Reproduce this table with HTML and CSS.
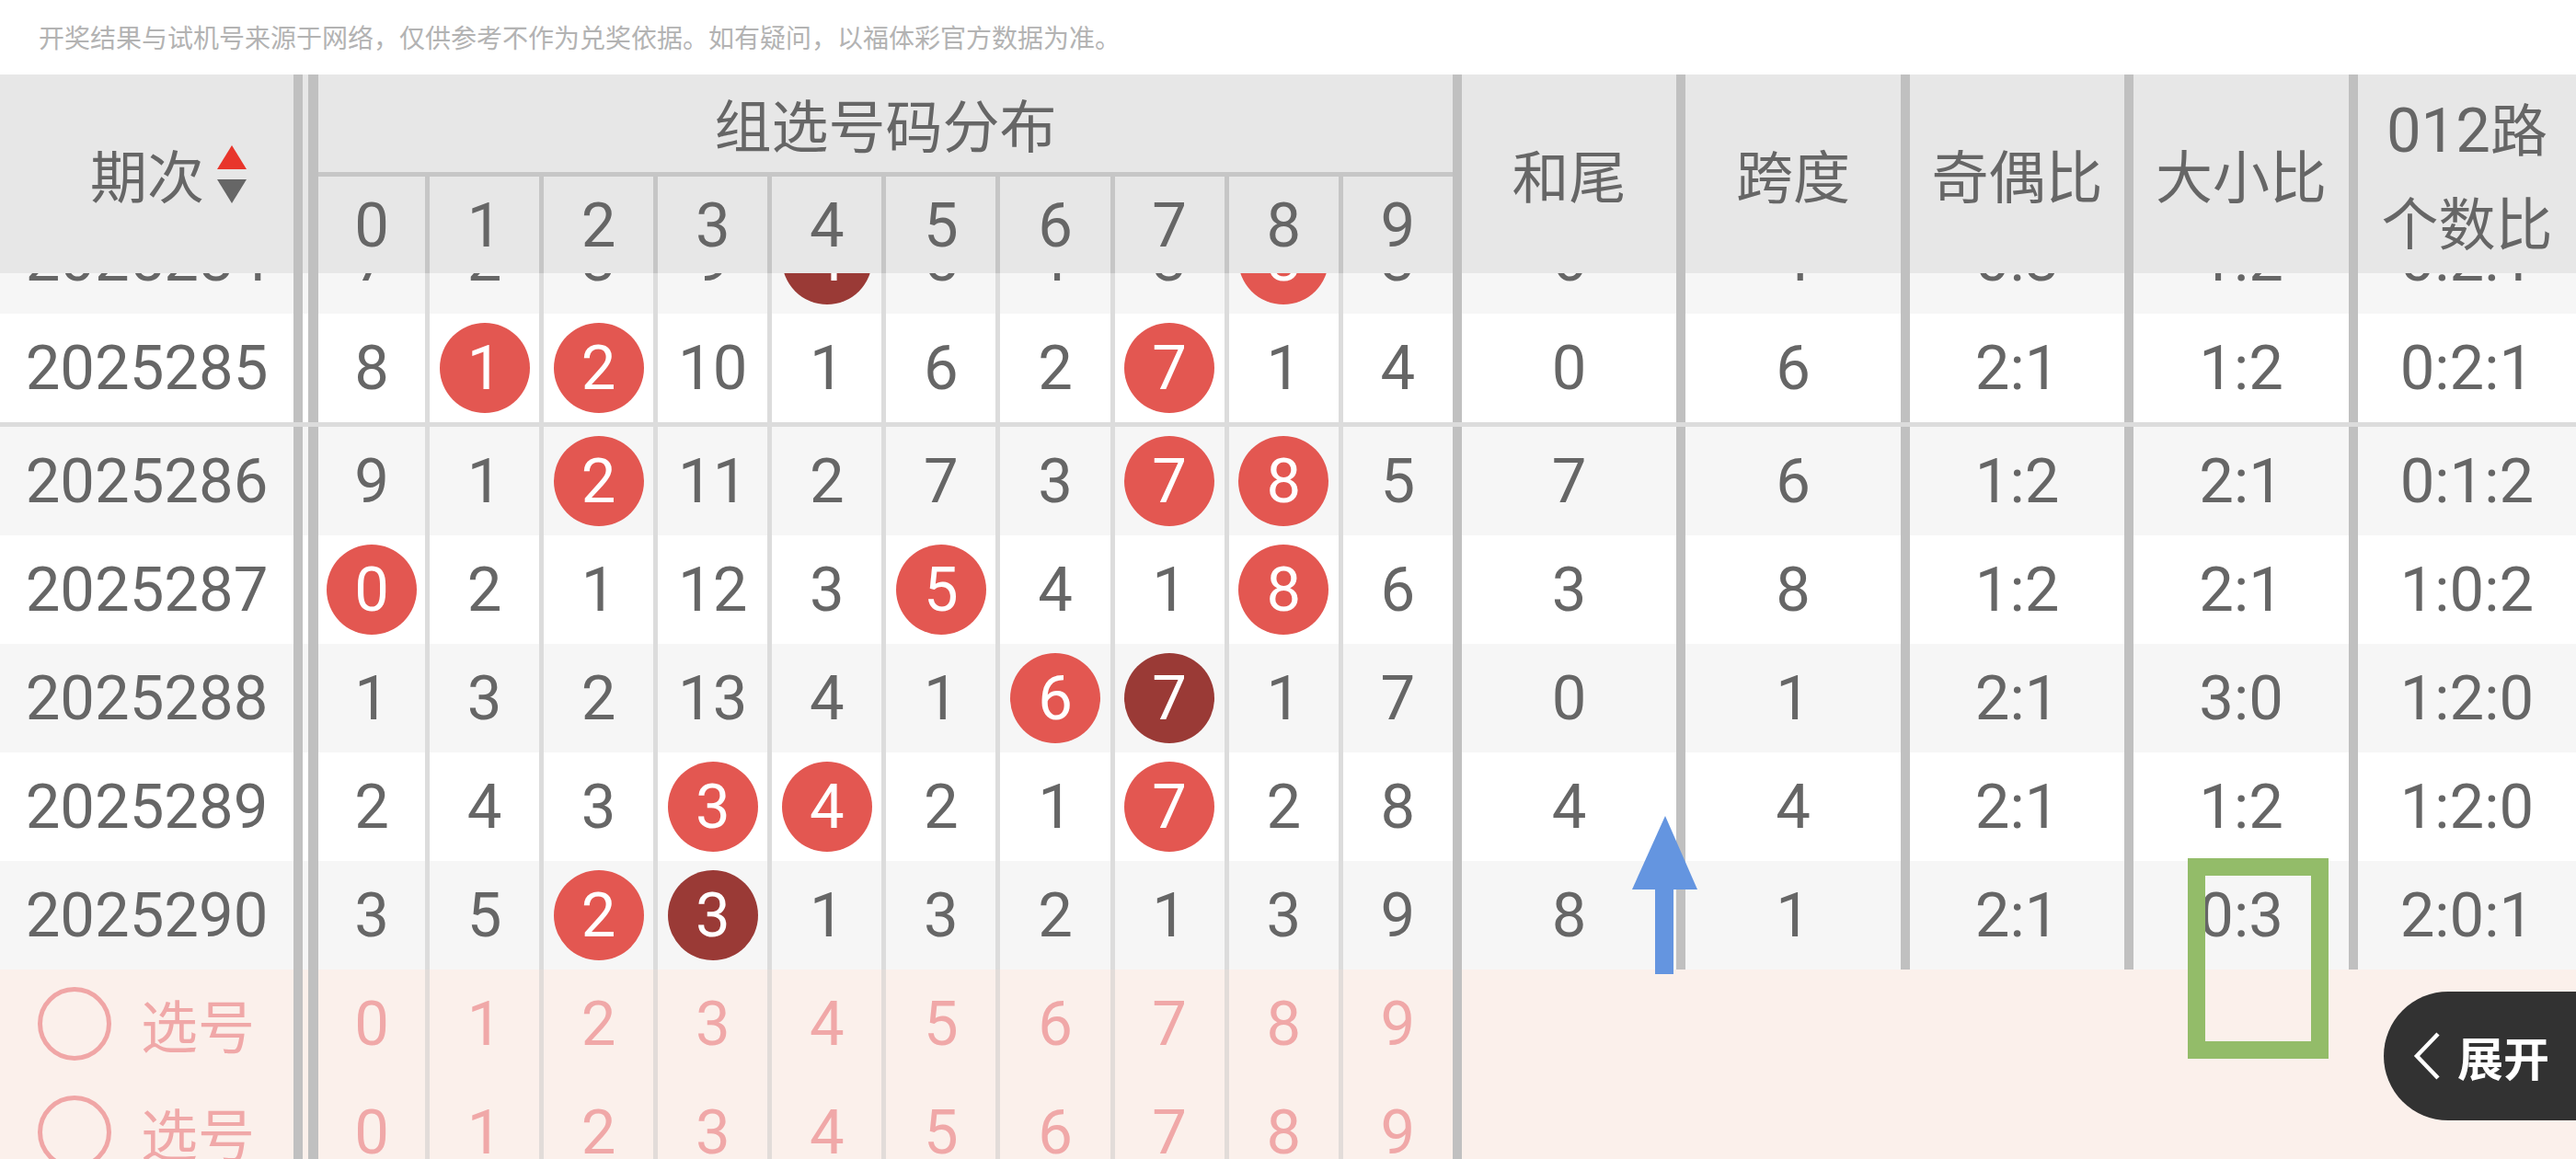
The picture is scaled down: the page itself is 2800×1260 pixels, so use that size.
FILE: index.html
```html
<!DOCTYPE html>
<html lang="zh-CN">
<head>
<meta charset="utf-8">
<title>组选号码分布</title>
<link rel="stylesheet" href="styles.css">
</head>
<body>
<div class="page">
  <div class="notice">开奖结果与试机号来源于网络，仅供参考不作为兑奖依据。如有疑问，以福体彩官方数据为准。</div>

  <div class="grid thead">
    <div class="h-qi"><span>期次</span>
      <svg class="sort" width="32" height="63" viewBox="0 0 32 63"><polygon points="16,0 32,26 0,26" fill="#e8352b"/><polygon points="0,37 32,37 16,63" fill="#666"/></svg>
    </div>
    <div class="dbl"></div>
    <div class="h-group">组选号码分布</div>
    <div class="h-d">0</div><div class="h-d">1</div><div class="h-d">2</div><div class="h-d">3</div><div class="h-d">4</div>
    <div class="h-d">5</div><div class="h-d">6</div><div class="h-d">7</div><div class="h-d">8</div><div class="h-d">9</div>
    <div class="h-r">和尾</div>
    <div class="h-r">跨度</div>
    <div class="h-r">奇偶比</div>
    <div class="h-r">大小比</div>
    <div class="h-r two"><span><span class="num">012</span>路<br>个数比</span></div>
  </div>

  <div class="clip">
    <div class="grid row alt">
      <div class="qi">2025284</div><div class="dbl"></div>
      <div class="d">7</div><div class="d">2</div><div class="d">3</div><div class="d">9</div><div class="d"><span class="ball dk">4</span></div>
      <div class="d">5</div><div class="d">1</div><div class="d">3</div><div class="d"><span class="ball">8</span></div><div class="d">3</div>
      <div class="r">6</div><div class="r">4</div><div class="r">0:3</div><div class="r">1:2</div><div class="r">0:2:1</div>
    </div>
  </div>

  <div class="grid row sep">
    <div class="qi">2025285</div><div class="dbl"></div>
    <div class="d">8</div><div class="d"><span class="ball">1</span></div><div class="d"><span class="ball">2</span></div><div class="d">10</div><div class="d">1</div>
    <div class="d">6</div><div class="d">2</div><div class="d"><span class="ball">7</span></div><div class="d">1</div><div class="d">4</div>
    <div class="r">0</div><div class="r">6</div><div class="r">2:1</div><div class="r">1:2</div><div class="r">0:2:1</div>
  </div>

  <div class="grid row alt">
    <div class="qi">2025286</div><div class="dbl"></div>
    <div class="d">9</div><div class="d">1</div><div class="d"><span class="ball">2</span></div><div class="d">11</div><div class="d">2</div>
    <div class="d">7</div><div class="d">3</div><div class="d"><span class="ball">7</span></div><div class="d"><span class="ball">8</span></div><div class="d">5</div>
    <div class="r">7</div><div class="r">6</div><div class="r">1:2</div><div class="r">2:1</div><div class="r">0:1:2</div>
  </div>

  <div class="grid row">
    <div class="qi">2025287</div><div class="dbl"></div>
    <div class="d"><span class="ball">0</span></div><div class="d">2</div><div class="d">1</div><div class="d">12</div><div class="d">3</div>
    <div class="d"><span class="ball">5</span></div><div class="d">4</div><div class="d">1</div><div class="d"><span class="ball">8</span></div><div class="d">6</div>
    <div class="r">3</div><div class="r">8</div><div class="r">1:2</div><div class="r">2:1</div><div class="r">1:0:2</div>
  </div>

  <div class="grid row alt">
    <div class="qi">2025288</div><div class="dbl"></div>
    <div class="d">1</div><div class="d">3</div><div class="d">2</div><div class="d">13</div><div class="d">4</div>
    <div class="d">1</div><div class="d"><span class="ball">6</span></div><div class="d"><span class="ball dk">7</span></div><div class="d">1</div><div class="d">7</div>
    <div class="r">0</div><div class="r">1</div><div class="r">2:1</div><div class="r">3:0</div><div class="r">1:2:0</div>
  </div>

  <div class="grid row">
    <div class="qi">2025289</div><div class="dbl"></div>
    <div class="d">2</div><div class="d">4</div><div class="d">3</div><div class="d"><span class="ball">3</span></div><div class="d"><span class="ball">4</span></div>
    <div class="d">2</div><div class="d">1</div><div class="d"><span class="ball">7</span></div><div class="d">2</div><div class="d">8</div>
    <div class="r">4</div><div class="r">4</div><div class="r">2:1</div><div class="r">1:2</div><div class="r">1:2:0</div>
  </div>

  <div class="grid row alt">
    <div class="qi">2025290</div><div class="dbl"></div>
    <div class="d">3</div><div class="d">5</div><div class="d"><span class="ball">2</span></div><div class="d"><span class="ball dk">3</span></div><div class="d">1</div>
    <div class="d">3</div><div class="d">2</div><div class="d">1</div><div class="d">3</div><div class="d">9</div>
    <div class="r">8</div><div class="r">1</div><div class="r">2:1</div><div class="r">0:3</div><div class="r">2:0:1</div>
  </div>

  <div class="grid row pick">
    <div class="xq"><span class="ring"></span><span class="xt">选号</span></div><div class="dbl"></div>
    <div class="d">0</div><div class="d">1</div><div class="d">2</div><div class="d">3</div><div class="d">4</div>
    <div class="d">5</div><div class="d">6</div><div class="d">7</div><div class="d">8</div><div class="d">9</div>
    <div class="xr"></div>
  </div>

  <div class="grid row pick">
    <div class="xq"><span class="ring"></span><span class="xt">选号</span></div><div class="dbl"></div>
    <div class="d">0</div><div class="d">1</div><div class="d">2</div><div class="d">3</div><div class="d">4</div>
    <div class="d">5</div><div class="d">6</div><div class="d">7</div><div class="d">8</div><div class="d">9</div>
    <div class="xr"></div>
  </div>

  <svg class="arrow" width="71" height="172" viewBox="0 0 71 172"><polygon points="36,0 71,80 0,80" fill="#6495e0"/><rect x="25" y="79" width="20" height="93" fill="#6495e0"/></svg>
  <div class="mark"></div>
  <div class="expand">
    <svg class="chev" width="30" height="52" viewBox="0 0 30 52"><polyline points="27,2 4,26 27,50" fill="none" stroke="#fff" stroke-width="4.5"/></svg>
    <span>展开</span>
  </div>
</div>
</body>
</html>
```

FILE: styles.css
```css
* { box-sizing: border-box; }
html, body { margin: 0; padding: 0; }
body {
  width: 2800px;
  height: 1260px;
  overflow: hidden;
  background: #fff;
  color: #666;
  font-family: Roboto, "Noto Sans CJK SC", sans-serif;
}
.page {
  position: relative;
  width: 2800px;
  height: 1260px;
  overflow: hidden;
}
.notice {
  height: 81px;
  line-height: 81px;
  padding-left: 42px;
  font-size: 28px;
  color: #b3b3b3;
  font-family: "Noto Sans CJK SC", sans-serif;
  white-space: nowrap;
}
.grid {
  display: grid;
  grid-template-columns: 319px 27px 116px repeat(9, 124.1px) repeat(4, 243.5px) 1fr;
}

/* header */
.thead {
  grid-template-rows: 111px 105px;
  background: #e7e7e7;
}
.h-qi {
  grid-row: 1 / 3;
  grid-column: 1;
  display: flex;
  align-items: center;
  padding-left: 98px;
  gap: 14px;
  font-family: "Noto Sans CJK SC", sans-serif;
  font-size: 62px;
}
.sort { display: block; }
.thead .dbl { grid-row: 1 / 3; grid-column: 2; }
.dbl {
  border-left: 10px solid #c0c0c0;
  border-right: 11px solid #c0c0c0;
}
.h-group {
  grid-row: 1;
  grid-column: 3 / 13;
  border-bottom: 5px solid #c6c6c6;
  display: flex;
  align-items: center;
  justify-content: center;
  font-family: "Noto Sans CJK SC", sans-serif;
  font-size: 62px;
}
.h-d {
  grid-row: 2;
  display: flex;
  align-items: center;
  justify-content: center;
  font-size: 67px;
}
.h-d + .h-d { border-left: 5px solid #c6c6c6; }
.h-r {
  grid-row: 1 / 3;
  border-left: 10px solid #c0c0c0;
  display: flex;
  align-items: center;
  justify-content: center;
  text-align: center;
  font-family: "Noto Sans CJK SC", sans-serif;
  font-size: 62px;
}
.h-r.two { line-height: 98px; }
.num { font-family: Roboto, sans-serif; font-size: 67px; }

/* body rows */
.row {
  grid-template-rows: 118px;
  background: #fff;
  font-size: 67px;
}
.row.alt { background: #f6f6f6; }
.row.sep { border-bottom: 5px solid #dcdcdc; }
.clip {
  height: 44px;
  overflow: hidden;
  display: flex;
  flex-direction: column;
  justify-content: flex-end;
}
.clip .row { flex-shrink: 0; }
.qi, .d, .r {
  display: flex;
  align-items: center;
  justify-content: center;
}
.d + .d { border-left: 5px solid #dcdcdc; }
.r { border-left: 10px solid #c0c0c0; }
.ball {
  width: 98px;
  height: 98px;
  border-radius: 50%;
  background: #e35751;
  color: #fff;
  display: flex;
  align-items: center;
  justify-content: center;
}
.ball.dk { background: #9a3a36; }

/* pick rows */
.row.pick { background: #fbf0eb; color: #f0a8a8; }
.pick .d + .d { border-left-color: #e2dcd9; }
.xq {
  display: flex;
  align-items: center;
  padding-left: 41px;
  gap: 32px;
}
.ring {
  width: 80px;
  height: 80px;
  border: 5px solid #f0a6a6;
  border-radius: 50%;
}
.xt {
  font-family: "Noto Sans CJK SC", sans-serif;
  font-size: 62px;
}
.xr {
  grid-column: 13 / 18;
  border-left: 10px solid #c0c0c0;
}

/* overlays */
.arrow {
  position: absolute;
  left: 1774px;
  top: 887px;
}
.mark {
  position: absolute;
  left: 2378px;
  top: 933px;
  width: 153px;
  height: 218px;
  border: 19px solid #93bc69;
}
.expand {
  position: absolute;
  left: 2591px;
  top: 1078px;
  width: 209px;
  height: 140px;
  border-radius: 70px 0 0 70px;
  background: #323232;
  color: #fff;
  display: flex;
  align-items: center;
  padding-left: 32px;
  gap: 18px;
  font-family: "Noto Sans CJK SC", sans-serif;
  font-weight: 700;
  font-size: 50px;
}
.chev { display: block; }
```
